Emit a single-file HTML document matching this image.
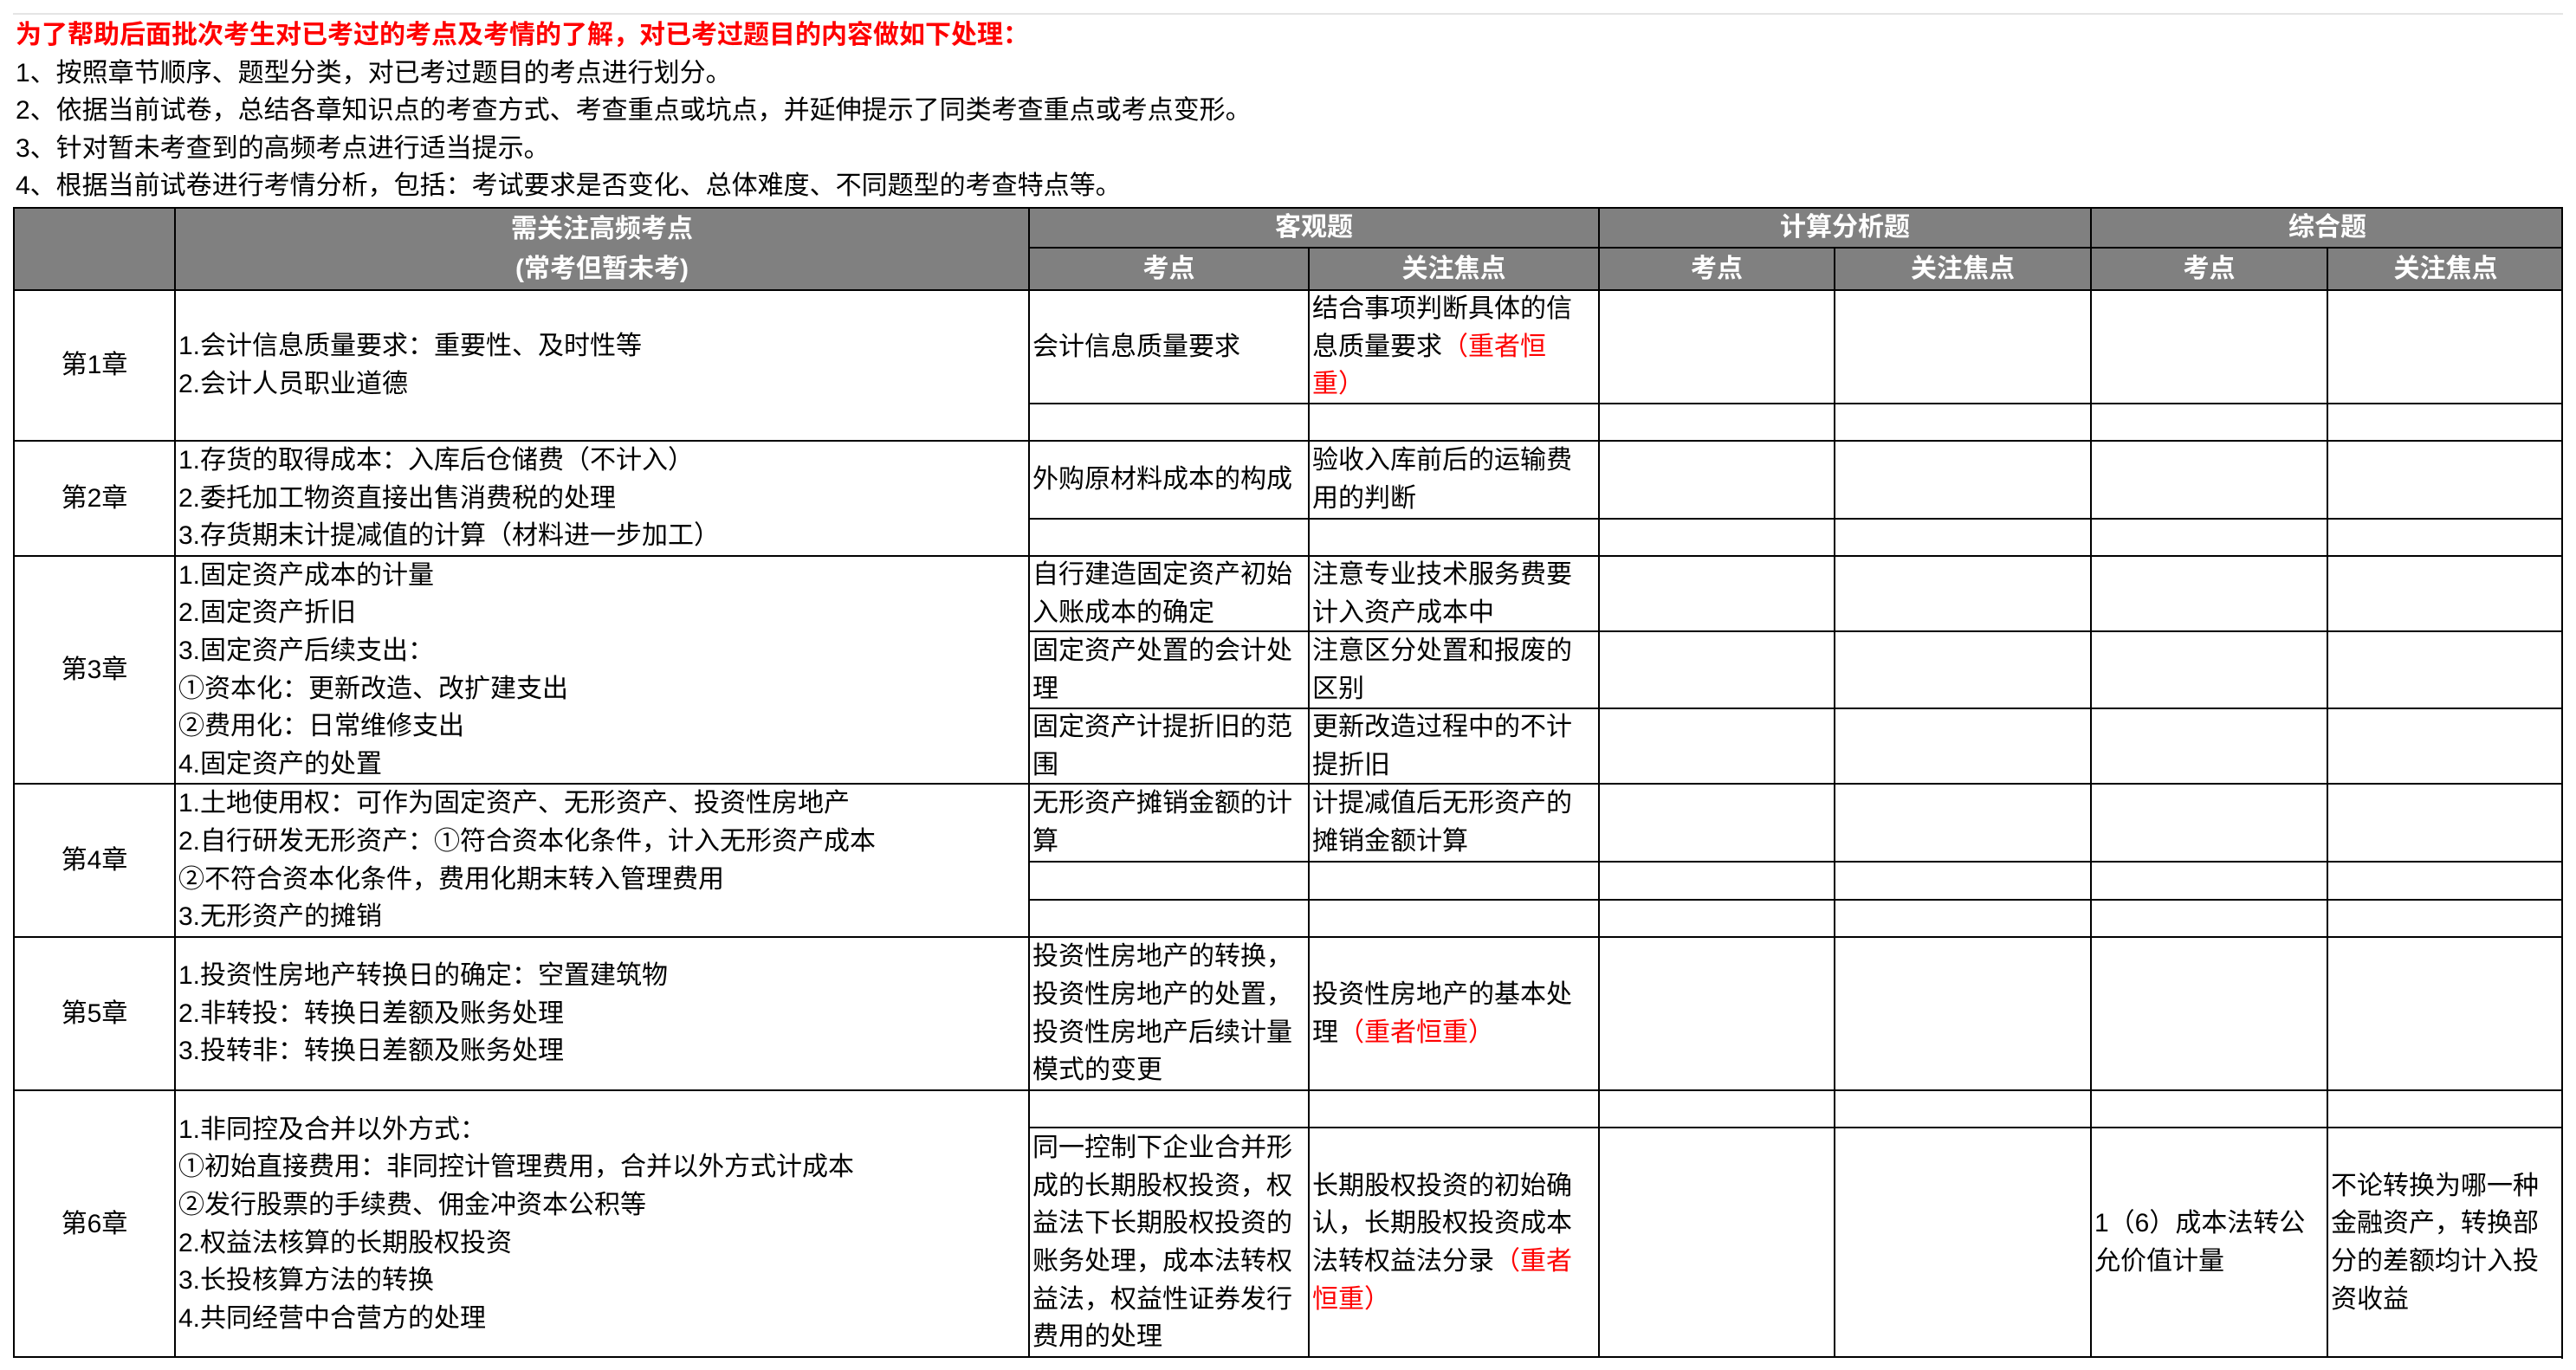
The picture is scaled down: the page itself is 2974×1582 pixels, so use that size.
<!DOCTYPE html>
<html><head><meta charset="utf-8"><style>
html,body{margin:0;padding:0;background:#fff;}
body{width:2974px;height:1582px;position:relative;overflow:hidden;font-family:"Liberation Sans","Noto Sans CJK SC",sans-serif;font-size:30px;color:#000;}
.intro{position:absolute;left:18px;top:19px;line-height:43.6px;white-space:nowrap;}
.intro .r{color:#ff0000;font-weight:bold;}
.topline{position:absolute;left:15px;top:15px;width:2944px;height:2px;background:#e4e4e4;}
.c{position:absolute;box-sizing:border-box;border-left:2px solid #000;border-top:2px solid #000;display:flex;align-items:center;line-height:43.6px;white-space:nowrap;padding-left:3px;overflow:hidden;}
.h{background:#808080;color:#fff;font-weight:bold;justify-content:center;text-align:center;padding-left:0;}
.ctr{justify-content:center;padding-left:0;}
.red{color:#ff0000;}
.edge{position:absolute;background:#000;}
</style></head><body>
<div class="topline"></div>
<div class="intro">
<div class="r">为了帮助后面批次考生对已考过的考点及考情的了解，对已考过题目的内容做如下处理：</div>
<div>1、按照章节顺序、题型分类，对已考过题目的考点进行划分。</div>
<div>2、依据当前试卷，总结各章知识点的考查方式、考查重点或坑点，并延伸提示了同类考查重点或考点变形。</div>
<div>3、针对暂未考查到的高频考点进行适当提示。</div>
<div>4、根据当前试卷进行考情分析，包括：考试要求是否变化、总体难度、不同题型的考查特点等。</div>
</div>

<div class="c h" style="left:15px;top:239px;width:186px;height:95px;"></div>
<div class="c h" style="left:201px;top:239px;width:986px;height:95px;line-height:46px;"><div>需关注高频考点<br>(常考但暂未考)</div></div>
<div class="c h" style="left:1187px;top:239px;width:658px;height:46px;">客观题</div>
<div class="c h" style="left:1845px;top:239px;width:568px;height:46px;">计算分析题</div>
<div class="c h" style="left:2413px;top:239px;width:546px;height:46px;">综合题</div>
<div class="c h" style="left:1187px;top:285px;width:323px;height:49px;">考点</div>
<div class="c h" style="left:1510px;top:285px;width:335px;height:49px;">关注焦点</div>
<div class="c h" style="left:1845px;top:285px;width:272px;height:49px;">考点</div>
<div class="c h" style="left:2117px;top:285px;width:296px;height:49px;">关注焦点</div>
<div class="c h" style="left:2413px;top:285px;width:273px;height:49px;">考点</div>
<div class="c h" style="left:2686px;top:285px;width:273px;height:49px;">关注焦点</div>

<div class="c ctr" style="left:15px;top:334px;width:186px;height:174px;">第1章</div>
<div class="c ctr" style="left:15px;top:508px;width:186px;height:133px;">第2章</div>
<div class="c ctr" style="left:15px;top:641px;width:186px;height:263px;">第3章</div>
<div class="c ctr" style="left:15px;top:904px;width:186px;height:177px;">第4章</div>
<div class="c ctr" style="left:15px;top:1081px;width:186px;height:177px;">第5章</div>
<div class="c ctr" style="left:15px;top:1258px;width:186px;height:309px;">第6章</div>

<div class="c" style="left:201px;top:334px;width:986px;height:174px;"><div>1.会计信息质量要求：重要性、及时性等<br>2.会计人员职业道德</div></div>
<div class="c" style="left:201px;top:508px;width:986px;height:133px;"><div>1.存货的取得成本：入库后仓储费（不计入）<br>2.委托加工物资直接出售消费税的处理<br>3.存货期末计提减值的计算（材料进一步加工）</div></div>
<div class="c" style="left:201px;top:641px;width:986px;height:263px;"><div>1.固定资产成本的计量<br>2.固定资产折旧<br>3.固定资产后续支出：<br>①资本化：更新改造、改扩建支出<br>②费用化：日常维修支出<br>4.固定资产的处置</div></div>
<div class="c" style="left:201px;top:904px;width:986px;height:177px;"><div>1.土地使用权：可作为固定资产、无形资产、投资性房地产<br>2.自行研发无形资产：①符合资本化条件，计入无形资产成本<br>②不符合资本化条件，费用化期末转入管理费用<br>3.无形资产的摊销</div></div>
<div class="c" style="left:201px;top:1081px;width:986px;height:177px;"><div>1.投资性房地产转换日的确定：空置建筑物<br>2.非转投：转换日差额及账务处理<br>3.投转非：转换日差额及账务处理</div></div>
<div class="c" style="left:201px;top:1258px;width:986px;height:309px;"><div>1.非同控及合并以外方式：<br>①初始直接费用：非同控计管理费用，合并以外方式计成本<br>②发行股票的手续费、佣金冲资本公积等<br>2.权益法核算的长期股权投资<br>3.长投核算方法的转换<br>4.共同经营中合营方的处理</div></div>

<div id="rows"></div>
<script>
var tops=[334,465,508,598,641,728,817,904,994,1038,1081,1258,1301,1567];
var xs=[1187,1510,1845,2117,2413,2686,2959];
var content={
 "0,0":"会计信息质量要求",
 "0,1":"结合事项判断具体的信<br>息质量要求<span class=red>（重者恒</span><br><span class=red>重）</span>",
 "2,0":"外购原材料成本的构成",
 "2,1":"验收入库前后的运输费<br>用的判断",
 "4,0":"自行建造固定资产初始<br>入账成本的确定",
 "4,1":"注意专业技术服务费要<br>计入资产成本中",
 "5,0":"固定资产处置的会计处<br>理",
 "5,1":"注意区分处置和报废的<br>区别",
 "6,0":"固定资产计提折旧的范<br>围",
 "6,1":"更新改造过程中的不计<br>提折旧",
 "7,0":"无形资产摊销金额的计<br>算",
 "7,1":"计提减值后无形资产的<br>摊销金额计算",
 "10,0":"投资性房地产的转换，<br>投资性房地产的处置，<br>投资性房地产后续计量<br>模式的变更",
 "10,1":"投资性房地产的基本处<br>理<span class=red>（重者恒重）</span>",
 "12,0":"同一控制下企业合并形<br>成的长期股权投资，权<br>益法下长期股权投资的<br>账务处理，成本法转权<br>益法，权益性证券发行<br>费用的处理",
 "12,1":"长期股权投资的初始确<br>认，长期股权投资成本<br>法转权益法分录<span class=red>（重者</span><br><span class=red>恒重）</span>",
 "12,4":"1（6）成本法转公<br>允价值计量",
 "12,5":"不论转换为哪一种<br>金融资产，转换部<br>分的差额均计入投<br>资收益"
};
var h="";
for(var r=0;r<tops.length-1;r++){for(var c=0;c<xs.length-1;c++){
 var t=content[r+","+c]||"";
 h+='<div class="c" style="left:'+xs[c]+'px;top:'+tops[r]+'px;width:'+(xs[c+1]-xs[c])+'px;height:'+(tops[r+1]-tops[r])+'px;"><div>'+t+'</div></div>';
}}
document.getElementById("rows").innerHTML=h;
</script>
<div class="edge" style="left:2957px;top:239px;width:2px;height:1330px;"></div>
<div class="edge" style="left:15px;top:1566px;width:2944px;height:2px;"></div>
</body></html>
